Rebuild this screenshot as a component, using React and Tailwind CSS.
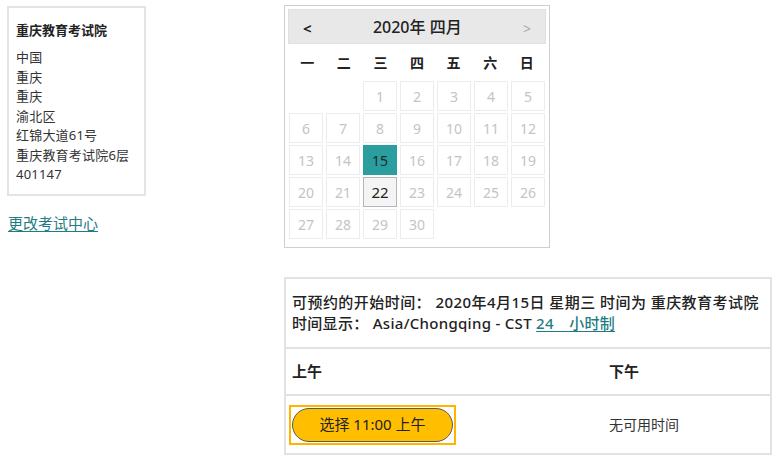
import React from 'react';

const FONT = { fontFamily: "'Noto Sans', 'Noto Sans CJK SC', sans-serif" };

const weekdays = ['一', '二', '三', '四', '五', '六', '日'];

function DayCell({ day }) {
  if (!day) return <div />;
  if (day === 15) {
    return (
      <div className="h-[30px] flex items-center justify-center bg-[#2a9d9f] text-[#1d2a2a] text-[14px]">
        {day}
      </div>
    );
  }
  if (day === 22) {
    return (
      <div className="h-[30px] flex items-center justify-center bg-[#f4f4f4] border border-[#b5b5b5] text-[#222] text-[15px]">
        {day}
      </div>
    );
  }
  return (
    <div className="h-[30px] flex items-center justify-center border border-[#ececec] text-[#c4c4c4] text-[14px]">
      {day}
    </div>
  );
}

function Calendar() {
  const days = [null, null];
  for (let i = 1; i <= 30; i++) days.push(i);

  return (
    <div className="w-[266px] h-[243px] border border-[#cfcfcf] p-[3px] bg-white">
      <div className="h-[35px] bg-[#e8e8e8] border border-[#e0e0e0] flex items-center justify-between px-[14px]">
        <span className="text-[15px] font-bold text-[#222] mt-[3px]">&lt;</span>
        <span className="text-[16px] font-medium text-[#222]">2020年 四月</span>
        <span className="text-[14px] text-[#aaa] mt-[3px]">&gt;</span>
      </div>
      <div className="grid grid-cols-7 h-[37px] items-center px-px">
        {weekdays.map((w) => (
          <div key={w} className="text-center text-[14px] font-bold text-[#222]">{w}</div>
        ))}
      </div>
      <div className="grid grid-cols-7 gap-x-[3px] gap-y-[2px] px-px">
        {days.map((d, i) => (
          <DayCell key={i} day={d} />
        ))}
      </div>
    </div>
  );
}

export default function App() {
  return (
    <div className="w-[780px] h-[467px] bg-white flex text-[#222]" style={FONT}>
      {/* 考试中心信息 */}
      <div className="ml-[7px] mt-[6px] w-[139px]">
        <div className="border-2 border-[#e4e4e4] h-[190px] px-[7px] pt-[12px]">
          <div className="text-[13px] font-bold leading-[20px]">重庆教育考试院</div>
          <div className="mt-[8px] text-[13px] leading-[19.5px] text-[#333] tracking-[0.2px]">
            <div>中国</div>
            <div>重庆</div>
            <div>重庆</div>
            <div>渝北区</div>
            <div>红锦大道61号</div>
            <div>重庆教育考试院6层</div>
            <div>401147</div>
          </div>
        </div>
        <a href="#" className="block mt-[16px] ml-px text-[15px] text-[#1f7c82] underline underline-offset-2">
          更改考试中心
        </a>
      </div>

      <div className="ml-[138px] mt-[5px] w-[488px]">
        <Calendar />

        {/* 可预约时间 */}
        <div className="mt-[29px] border-2 border-[#e2e2e2]">
          <div className="h-[68px] px-[6px] pt-[13px] text-[15px] font-medium leading-[21px] text-[#222]">
            <div className="tracking-[0.45px] whitespace-nowrap">可预约的开始时间： 2020年4月15日 星期三 时间为 重庆教育考试院</div>
            <div className="tracking-[0.3px]">
              时间显示： Asia/Chongqing - CST{' '}
              <a href="#" className="text-[#1f7c82] underline underline-offset-2">24　小时制</a>
            </div>
          </div>
          <div className="flex border-t-2 border-[#e2e2e2] h-[47px] items-center text-[15px] font-bold">
            <div className="w-[317px] pl-[6px]">上午</div>
            <div className="pl-[6px]">下午</div>
          </div>
          <div className="flex border-t-2 border-[#e2e2e2] h-[59px] items-center">
            <div className="w-[317px] pl-[3px]">
              <div className="inline-block border-[2px] border-[#ffb400] p-px">
                <button className="w-[161px] h-[34px] rounded-full bg-[#ffbf00] border border-[#5a5a5a] text-[15px] text-[#222]">
                  选择 11:00 上午
                </button>
              </div>
            </div>
            <div className="pl-[6px] text-[14px] text-[#333]">无可用时间</div>
          </div>
        </div>
      </div>
    </div>
  );
}
